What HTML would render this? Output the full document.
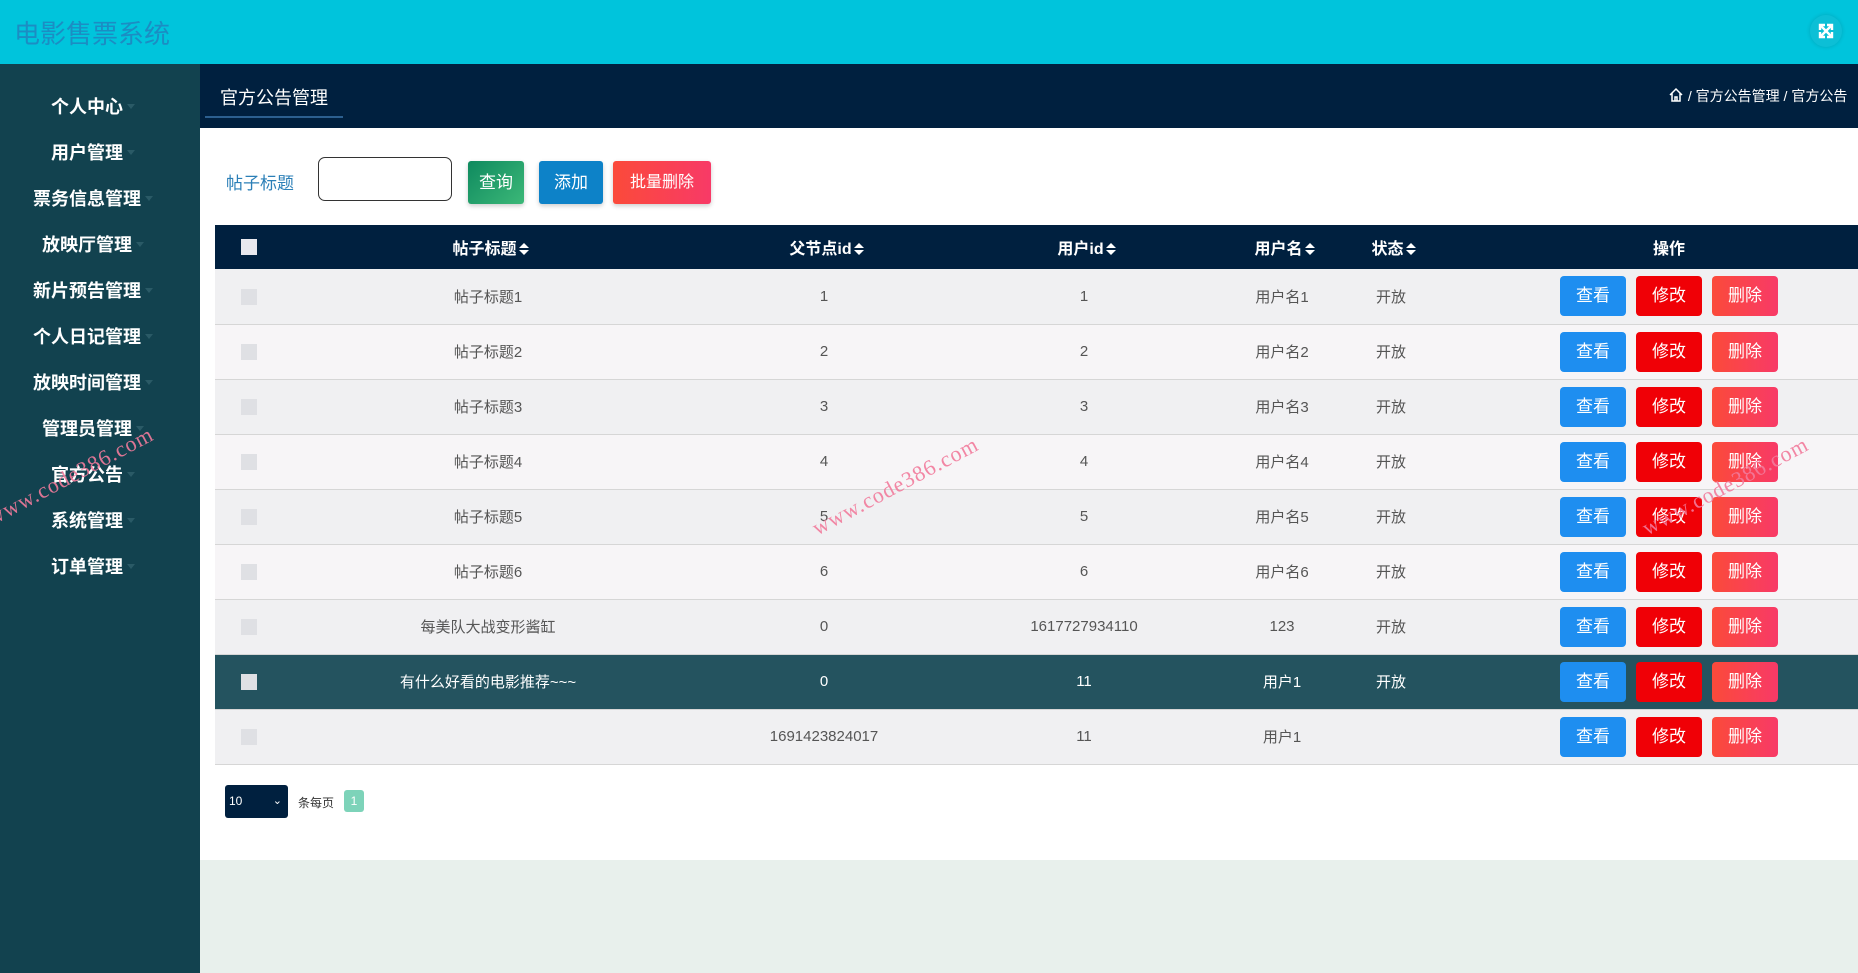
<!DOCTYPE html>
<html><head><meta charset="utf-8"><style>
*{margin:0;padding:0;box-sizing:border-box}
body{width:1858px;height:973px;overflow:hidden;font-family:"Liberation Sans","Noto Sans CJK SC",sans-serif;background:#e8f0ec;position:relative}
.top{position:absolute;left:0;top:0;width:1858px;height:64px;background:#00c4dc}
.title{position:absolute;left:14px;top:14px;font-size:26px;color:#1b8dc3}
.fs{position:absolute;left:1810px;top:15px;width:32px;height:32px;border-radius:50%;background:#0cbfd6;box-shadow:0 0 4px rgba(0,0,0,.15)}
.side{position:absolute;left:0;top:64px;width:200px;height:909px;background:#12424f}
.mi{position:absolute;left:0;width:186px;text-align:center;color:#fff;font-size:18px;line-height:24px;font-weight:bold}
.mi:after{content:"";display:inline-block;border:4px solid transparent;border-top:5px solid #2a5a66;margin-left:4px;vertical-align:middle}
.crumb{position:absolute;left:200px;top:64px;width:1658px;height:64px;background:#00203f}
.tab{position:absolute;left:20px;top:20px;color:#fff;font-size:18px}
.tabline{position:absolute;left:5px;top:52px;width:138px;height:2px;background:#2c5f8f}
.bc{position:absolute;left:1468px;top:22px;color:#fff;font-size:14px;white-space:nowrap}
.main{position:absolute;left:200px;top:128px;width:1658px;height:732px;background:#fff}
.lbl{position:absolute;left:26px;top:41px;font-size:17px;color:#2b7fb7}
.inp{position:absolute;left:118px;top:29px;width:134px;height:44px;border:1.5px solid #333;border-radius:7px}
.btn{position:absolute;color:#fff;font-size:17px;text-align:center;border-radius:3px;box-shadow:0 2px 5px rgba(0,0,0,.2)}
table{position:absolute;left:15px;top:97px;width:1692px;border-collapse:collapse;table-layout:fixed}
th{background:#00203f;color:#fff;height:44px;font-size:16px;font-weight:bold}
td{height:55px;text-align:center;font-size:15px;color:#555;border-bottom:1px solid #d6d6d6}
tr.a td{background:#f0f0f2}tr.b td{background:#f7f5f7}
tr.h td{background:#24535f;color:#fff}
.cb{display:inline-block;width:16px;height:16px;background:#dfe0e4;vertical-align:middle}
th .cb{background:#e8e8ee}
.s{display:inline-block;width:0;height:0;vertical-align:middle;position:relative;margin-left:7px;top:-1px}
.s:before{content:"";position:absolute;left:-5px;top:-6px;border:5px solid transparent;border-bottom:5px solid #fff;border-top:0}
.s:after{content:"";position:absolute;left:-5px;top:1px;border:5px solid transparent;border-top:5px solid #fff;border-bottom:0}
.ab{display:inline-block;width:66px;height:40px;line-height:40px;color:#fff;font-size:17px;border-radius:4px;margin:0 5px}
.v{background:#1e8ef0}.e{background:#f00006}.d{background:linear-gradient(90deg,#fb4a3a,#f83a67)}
.wm{position:absolute;color:#f27b9c;font-size:22px;font-family:"Liberation Serif",serif;transform:rotate(-28deg);transform-origin:left bottom;white-space:nowrap;opacity:.9;letter-spacing:1px}
</style></head><body>
<div class="top"><div class="title">电影售票系统</div><div class="fs"><svg width="32" height="32" viewBox="0 0 32 32"><g stroke="#fff" stroke-width="2.4" fill="none"><path d="M10 10l12 12M22 10l-12 12"/><path d="M10 15v-5h5M22 15v-5h-5M10 17v5h5M22 17v5h-5"/></g></svg></div></div>
<div class="side">
<div class="mi" style="top:31px">个人中心</div>
<div class="mi" style="top:77px">用户管理</div>
<div class="mi" style="top:123px">票务信息管理</div>
<div class="mi" style="top:169px">放映厅管理</div>
<div class="mi" style="top:215px">新片预告管理</div>
<div class="mi" style="top:261px">个人日记管理</div>
<div class="mi" style="top:307px">放映时间管理</div>
<div class="mi" style="top:353px">管理员管理</div>
<div class="mi" style="top:399px">官方公告</div>
<div class="mi" style="top:445px">系统管理</div>
<div class="mi" style="top:491px">订单管理</div>
</div>
<div class="crumb"><div class="tab">官方公告管理</div><div class="tabline"></div>
<div class="bc"><svg width="16" height="16" viewBox="0 0 16 16" style="vertical-align:-2px"><path d="M2 8L8 2l6 6M4 6v8h8V6M7 14v-4h2v4" stroke="#fff" stroke-width="1.5" fill="none"/></svg> / 官方公告管理 / 官方公告</div></div>
<div class="main">
<div class="lbl">帖子标题</div><div class="inp"></div>
<div class="btn" style="left:268px;top:33px;width:56px;height:43px;line-height:43px;background:linear-gradient(135deg,#0f8a5f,#3cb878)">查询</div>
<div class="btn" style="left:339px;top:33px;width:64px;height:43px;line-height:43px;background:#0d82c8">添加</div>
<div class="btn" style="left:413px;top:33px;width:98px;height:43px;line-height:43px;background:linear-gradient(90deg,#fb4a3a,#f83a67);font-size:16px">批量删除</div>
<table>
<colgroup><col style="width:68px"><col style="width:410px"><col style="width:262px"><col style="width:258px"><col style="width:138px"><col style="width:80px"><col style="width:476px"></colgroup>
<tr><th><span class="cb"></span></th><th>帖子标题<span class="s"></span></th><th>父节点id<span class="s"></span></th><th>用户id<span class="s"></span></th><th>用户名<span class="s"></span></th><th>状态<span class="s"></span></th><th>操作</th></tr>
<tr class="a"><td><span class="cb"></span></td><td>帖子标题1</td><td>1</td><td>1</td><td>用户名1</td><td>开放</td><td><span class="ab v">查看</span><span class="ab e">修改</span><span class="ab d">删除</span></td></tr>
<tr class="b"><td><span class="cb"></span></td><td>帖子标题2</td><td>2</td><td>2</td><td>用户名2</td><td>开放</td><td><span class="ab v">查看</span><span class="ab e">修改</span><span class="ab d">删除</span></td></tr>
<tr class="a"><td><span class="cb"></span></td><td>帖子标题3</td><td>3</td><td>3</td><td>用户名3</td><td>开放</td><td><span class="ab v">查看</span><span class="ab e">修改</span><span class="ab d">删除</span></td></tr>
<tr class="b"><td><span class="cb"></span></td><td>帖子标题4</td><td>4</td><td>4</td><td>用户名4</td><td>开放</td><td><span class="ab v">查看</span><span class="ab e">修改</span><span class="ab d">删除</span></td></tr>
<tr class="a"><td><span class="cb"></span></td><td>帖子标题5</td><td>5</td><td>5</td><td>用户名5</td><td>开放</td><td><span class="ab v">查看</span><span class="ab e">修改</span><span class="ab d">删除</span></td></tr>
<tr class="b"><td><span class="cb"></span></td><td>帖子标题6</td><td>6</td><td>6</td><td>用户名6</td><td>开放</td><td><span class="ab v">查看</span><span class="ab e">修改</span><span class="ab d">删除</span></td></tr>
<tr class="a"><td><span class="cb"></span></td><td>每美队大战变形酱缸</td><td>0</td><td>1617727934110</td><td>123</td><td>开放</td><td><span class="ab v">查看</span><span class="ab e">修改</span><span class="ab d">删除</span></td></tr>
<tr class="h"><td><span class="cb"></span></td><td>有什么好看的电影推荐~~~</td><td>0</td><td>11</td><td>用户1</td><td>开放</td><td><span class="ab v">查看</span><span class="ab e">修改</span><span class="ab d">删除</span></td></tr>
<tr class="a"><td><span class="cb"></span></td><td></td><td>1691423824017</td><td>11</td><td>用户1</td><td></td><td><span class="ab v">查看</span><span class="ab e">修改</span><span class="ab d">删除</span></td></tr>
</table>
<div style="position:absolute;left:25px;top:657px;width:63px;height:33px;background:#00203f;border-radius:3px;color:#fff;font-size:12px;line-height:33px;padding-left:4px">10<span style="position:absolute;right:6px;font-size:11px">⌄</span></div>
<div style="position:absolute;left:98px;top:666px;font-size:12px;color:#333">条每页</div>
<div style="position:absolute;left:144px;top:662px;width:20px;height:22px;background:#7dd3b9;border-radius:3px;color:#fff;font-size:12px;text-align:center;line-height:22px">1</div>
</div>
<div class="wm" style="left:-5px;top:505px">www.code386.com</div>
<div class="wm" style="left:820px;top:515px">www.code386.com</div>
<div class="wm" style="left:1650px;top:515px">www.code386.com</div>
</body></html>
